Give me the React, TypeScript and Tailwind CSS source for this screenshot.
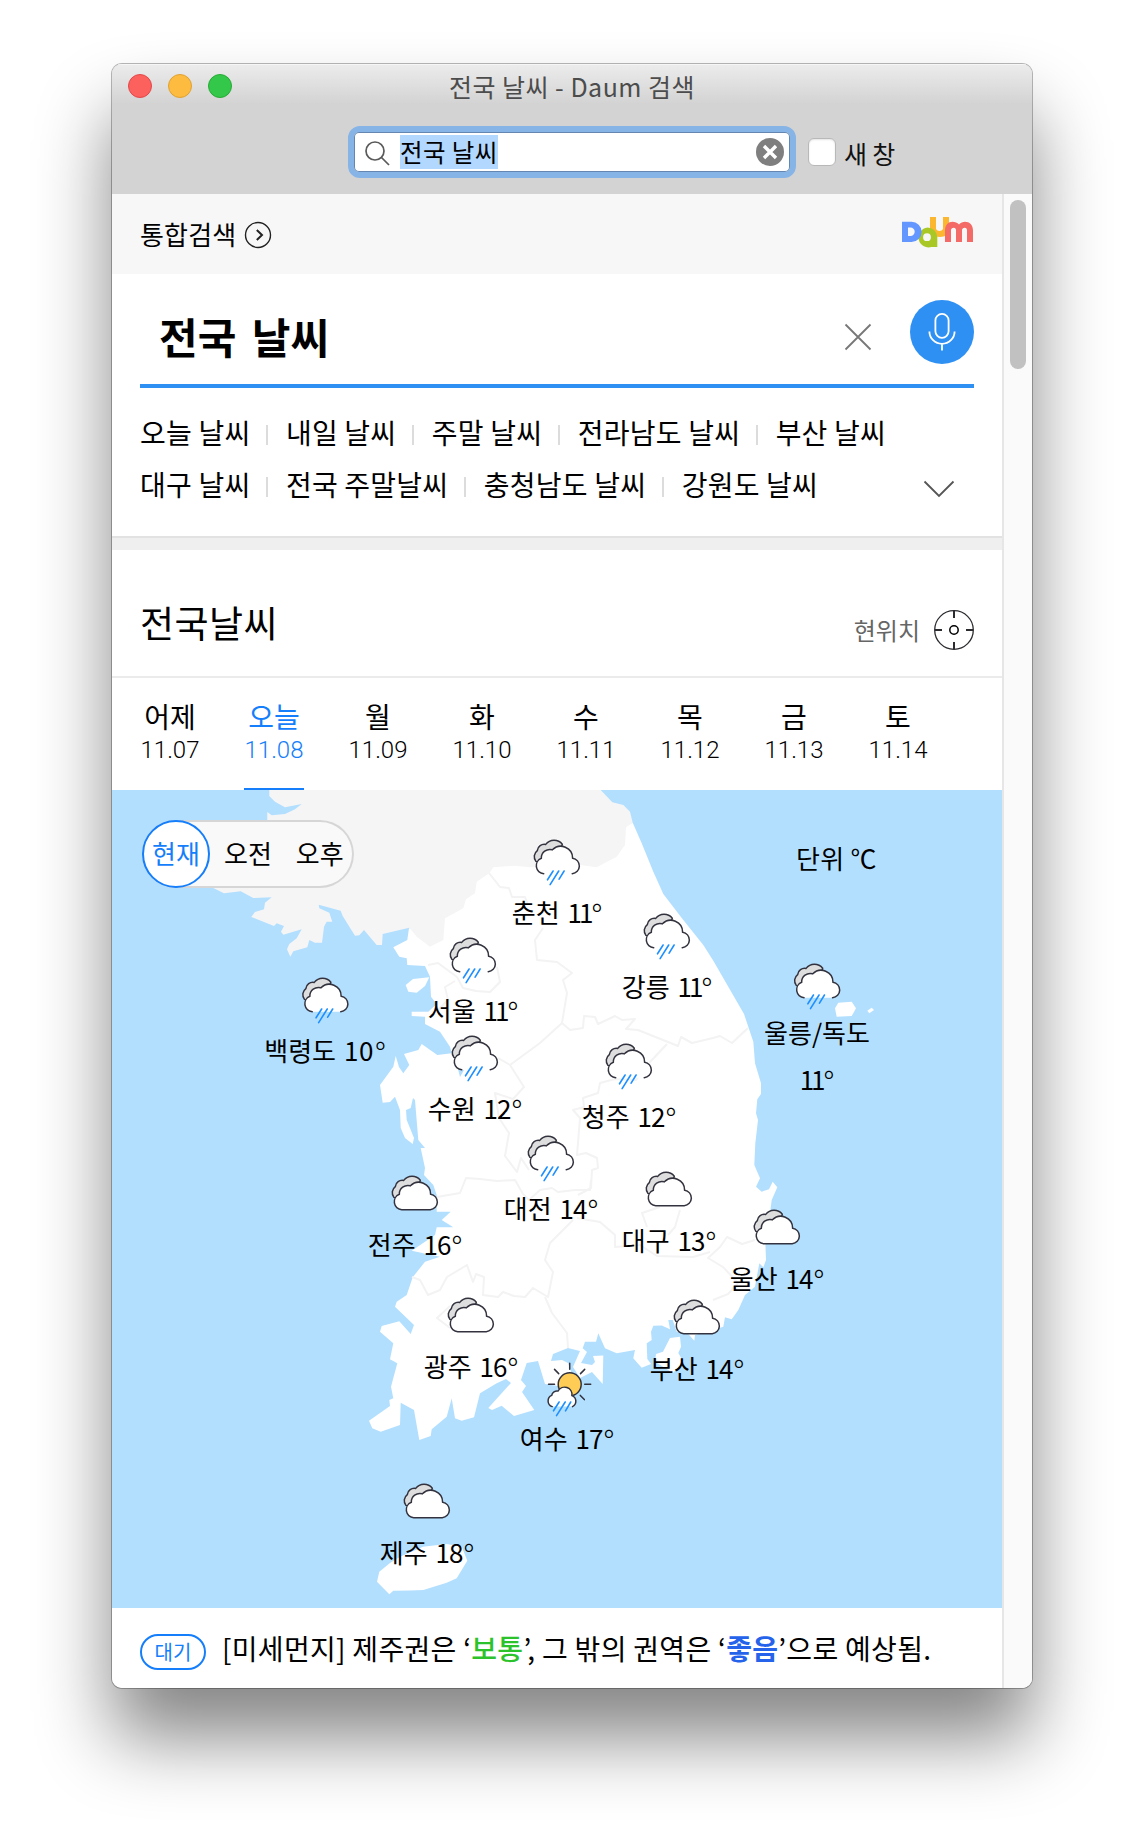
import React from 'react';

type Kind = 'rain' | 'cloud' | 'sun';

interface City {
  name: string;
  temp: number;
  x: number;
  y: number;
  kind: Kind;
  stacked?: boolean;
}

/* x = horizontal centre of the pin, y = top of its icon, both inside the 890×818 map */
const CITIES: City[] = [
  { name: '춘천', temp: 11, x: 445, y: 49, kind: 'rain' },
  { name: '강릉', temp: 11, x: 555, y: 123, kind: 'rain' },
  { name: '서울', temp: 11, x: 361, y: 147, kind: 'rain' },
  { name: '백령도', temp: 10, x: 213, y: 187, kind: 'rain' },
  { name: '수원', temp: 12, x: 363, y: 245, kind: 'rain' },
  { name: '청주', temp: 12, x: 517, y: 253, kind: 'rain' },
  { name: '대전', temp: 14, x: 439, y: 345, kind: 'rain' },
  { name: '울릉/독도', temp: 11, x: 705, y: 173, kind: 'rain', stacked: true },
  { name: '전주', temp: 16, x: 303, y: 385, kind: 'cloud' },
  { name: '대구', temp: 13, x: 557, y: 381, kind: 'cloud' },
  { name: '울산', temp: 14, x: 665, y: 419, kind: 'cloud' },
  { name: '광주', temp: 16, x: 359, y: 507, kind: 'cloud' },
  { name: '부산', temp: 14, x: 585, y: 509, kind: 'cloud' },
  { name: '여수', temp: 17, x: 455, y: 571, kind: 'sun' },
  { name: '제주', temp: 18, x: 315, y: 693, kind: 'cloud' },
];

const DAYS = [
  ['어제', '11.07'],
  ['오늘', '11.08'],
  ['월', '11.09'],
  ['화', '11.10'],
  ['수', '11.11'],
  ['목', '11.12'],
  ['금', '11.13'],
  ['토', '11.14'],
];

const RELATED = [
  ['오늘 날씨', '내일 날씨', '주말 날씨', '전라남도 날씨', '부산 날씨'],
  ['대구 날씨', '전국 주말날씨', '충청남도 날씨', '강원도 날씨'],
];

const FRONT = 'M12 34.7A8 8 0 0 1 9.6 19.3A8.6 8.6 0 0 1 20.7 10.8A11.8 11.8 0 0 1 40.9 19.2A7.8 7.8 0 0 1 40.5 34.7';

function CloudIcon({ rain }: { rain: boolean }) {
  return (
    <svg className="block h-12 w-[50px]" viewBox="0 0 50 48" fill="none" stroke="#33333f" strokeWidth="1.5" strokeLinecap="round">
      <path d="M4.2 22.4A7.6 7.6 0 0 1 5.6 11.6A7 7 0 0 1 14 5.4A10.6 10.6 0 0 1 30.6 5.2L28 14L10 24Z" fill="#dedede" />
      <path d={FRONT} fill="#fff" stroke="none" />
      <path d={rain ? FRONT : FRONT + 'Z'} fill={rain ? 'none' : '#fff'} />
      {rain && <path d="M21.4 32L15.8 40.8M27 32L18.4 45.6M32.4 32L27.4 40.2" stroke="#1e90ff" strokeWidth="1.6" />}
    </svg>
  );
}

function SunRainIcon() {
  return (
    <svg className="ml-[5px] block h-14 w-[50px]" viewBox="24 10 50 56" fill="none" stroke="#33333f" strokeWidth="1.5" strokeLinecap="round">
      <path d="M49 12.3v6M33.8 18.4l4.2 4.2M64 18.4l-4.2 4.2M27.8 33.3h6M64 33.3h6M59.6 44.4l4 4.2" />
      <circle cx="49" cy="33.3" r="11.5" fill="#ffcd55" />
      <path d="M31.5 55.6A6 6 0 0 1 31 44.4A5.4 5.4 0 0 1 37.4 40A7.4 7.4 0 0 1 51.2 44.6A6 6 0 0 1 51.8 55.6" fill="#fff" />
      <path d="M38.4 51L32.8 59.8M44.5 51L35.8 64.6M50 51L44.8 59.8" stroke="#1e90ff" strokeWidth="1.6" />
    </svg>
  );
}

function Temp({ value }: { value: number }) {
  const spacing = value === 11 ? 'tracking-[-3px]' : value === 10 ? 'tracking-[0.5px]' : 'tracking-[-1px]';
  return (
    <span>
      <span className={spacing}>{value}</span>
      <span className="ml-px text-[31px] leading-none font-light align-[-4px]">°</span>
    </span>
  );
}

function CityPin({ city }: { city: City }) {
  const gap = city.kind === 'rain' ? 'h-[51px]' : city.kind === 'sun' ? 'h-[55px]' : 'h-[47px]';
  return (
    <div
      className="absolute flex -translate-x-1/2 flex-col items-center whitespace-nowrap"
      style={{ left: city.x, top: city.y }}
    >
      <div className={gap}>{city.kind === 'sun' ? <SunRainIcon /> : <CloudIcon rain={city.kind === 'rain'} />}</div>
      {city.stacked ? (
        <div className="-mt-[6px] flex flex-col items-center text-[26px] leading-[47px]">
          <span className="h-[47px]">{city.name}</span>
          <span className="h-[47px]">
            <Temp value={city.temp} />
          </span>
        </div>
      ) : (
        <div className="flex h-[44px] gap-2 text-[26px] leading-[44px]">
          <span>{city.name}</span>
          <Temp value={city.temp} />
        </div>
      )}
    </div>
  );
}

function MapArt() {
  return (
    <svg className="block h-[818px] w-[890px]" viewBox="112 790 890 818">
      <g fill="#fff">
        <path d="M409 928L430 940L445 915L476 875L493 860L600 860L626 825L632.7 822.7L641.7 843.3L653.3 871.7L663.3 894L683.3 920L703.3 945L713.3 960.7L744 1014L753.3 1041.7L755 1063.3L761 1083.3V1094L757.3 1099.3L756 1113.3L758 1120L755.3 1143.3L754.3 1165L760 1178.3L756 1186.7L761.7 1191.7L769 1189.3L772.7 1181.7L777.3 1187.3L771.7 1200L770 1213L765 1233L766 1260L763.3 1267.3L759.3 1263.3L755 1286.7L745 1295L738.3 1310L731.7 1319.3L725 1317.3L723.3 1326.7L695 1335L694.3 1340.7L688.3 1334L676.7 1331.7L672.7 1320H668.3L670 1329.3L661.7 1325.5L653.3 1325.7L651 1331.7L651.7 1340L646.7 1343.3L647.3 1359L651 1364L641.7 1367.7L633.3 1358.3L635 1350L616.7 1353.3L605 1348.3L598.3 1333.3L596 1341.7H585L582.7 1348.3L587 1352L581 1363L592 1365L595 1362L593 1356L603.3 1355.5L602.7 1384L592 1372L580 1378L573 1367L580 1351L568 1348L553 1354L551 1361L562 1360L568 1363L574 1380L558 1386L545 1384L538 1361L526.7 1363L521 1380L526 1386L522 1392L534.3 1410L514 1416L501.7 1405.7L492 1410L488.3 1408L511 1383L506 1379L496.7 1383.3L480 1393.3L474 1417.3L461.7 1420.7L455 1418.3L451.7 1398.3L446.7 1416.7L431.7 1429.3L430.7 1436L419.3 1440L414 1410L400.7 1402.7L400 1425L380.7 1431.7L372.3 1428.3L369 1420.7L390 1406L389.3 1400L393.3 1398.3L391 1386.7L397.3 1363.3L390 1359.3L393.3 1343.3L380 1331.7L381.7 1326L399.3 1321.3L410.7 1334L414 1325L395 1306.7L396.7 1301.7L406.7 1295L412.7 1277.3L425 1261.7L440 1256.7L411.7 1250.7L435 1235L436.7 1227.3H453.3L441.7 1220L450.7 1211.7H436.7V1195L433.3 1185L424 1175L425 1168L420.7 1148H425L418.3 1140L415 1100L413 1098L410.7 1108L406 1110L406.7 1120L414 1138L412.7 1144L405 1138L400.7 1128L400 1110L395 1096.7L390 1102L382.7 1102.7L380 1085L393.3 1066.7L395.7 1056L399 1067L403.3 1073.3L409.3 1065L404 1054L418.3 1050L421.7 1044L437.3 1055L451.7 1053.3L450 1046.7L440 1031.7L425 1024V1016.7L411.7 1016V1011.7H428.3L436.7 1004L431 996.7L430 976.7L425 966L407.3 965L406.7 958.3L399.3 956.7L393.3 947.3L407.3 940Z" />
        <path d="M405.7 985L413 979L429.3 977.3L425 986L416.7 992.7L408.3 991.7Z" />
        <path d="M835 1008.3L838.3 1002.7L851.7 1001.7L856 1008.3L851.7 1016L836.7 1016.7Z" />
        <path d="M867.3 1010.7L871.7 1007.7L874 1010L869.3 1013.3Z" />
        <path d="M670 1338L680 1336.7L681 1346.7L678.3 1353L683.3 1361.7L673 1373L655 1361.7L656 1354L663 1351.7Z" />
        <path d="M377 1581.7L379.3 1571.7L390 1563L400 1556.7L423 1546.7L446.7 1544L461.7 1546.7L467.3 1560.7L456.7 1578.3L446.7 1582.7L423.3 1590L410 1590.5L393.3 1590.7L389.3 1594.3Z" />
      </g>
      <path fill="#b3dfff" d="M458 1069L464 1070L460 1077Z" />
      <path
        fill="#f5f5f5"
        d="M269.3 790V796L275 801.7L285 807.3L301.7 804L295 809.3L285 814L271.7 815.3L267.3 812V821L200 870L213.3 888L224 893.3L240.7 891.3L253.3 898L271.7 897.3L265 902.7L264 909.3L255 912L251.3 917L274 926L276.7 923.3L284 926L281 931.7L283.3 934.7L301.7 929.3L296.7 938.3L289.3 944L287 949.3L290.3 956.7L293.3 951.3L307.3 947.3L309.3 940L315 942.7H322L324 926.7L326.7 921.7L332.3 921.7L329.3 912.7L319.3 908.3L318.7 904.7L340.7 910.7L342.7 916L355 935.7L359.3 935.3L364 930L376.7 945H382L382.7 934L409.3 927.7L416.7 936.7L430 946.7L443.3 940L445 918.3L463.3 908.3L466 899.3L475 893.3L476.7 881.7L489.3 873.3L493.3 867.3L515 865.7L530 867.3L560 864L580 865L596.7 867.3L616.7 856.7L625 845L626 827.3L632.7 822.7L630 811.7L623.3 805L612.3 802.3L600.7 790Z"
      />
      <g fill="none" stroke="#f3f3f3" strokeWidth="2" strokeLinejoin="round">
        <path d="M489 873L500 887L509 888L512 897L525 897L528 905M543 928L535 940L537 960L557 962L572 973L563 980L567 993L562 1023L540 1043L510 1065L498 1058M510 1065L524 1087L513 1099L495 1093L499 1118L509 1133L505 1156L517 1172L521 1158L529 1170" />
        <path d="M562 1023L570 1030L583 1028L584 1016L595 1017L598 1024L615 1016L622 1020L635 1019L626 1029L638 1030L678 1046L681 1037L692 1043L713 1038L720 1036L732 1043L748 1028" />
        <path d="M667 1044L650 1062L636 1080L615 1079L600 1083L598 1093L583 1098L584 1107L573 1110L580 1118L577 1155L586 1153L597 1158L598 1168L592 1170L591 1188L578 1195" />
        <path d="M437 1197L460 1193L466 1178L480 1179L497 1181L515 1180L523 1194L529 1200L540 1190L552 1188L558 1192L575 1190L590 1190L591 1180" />
        <path d="M577 1218L600 1222L615 1235V1247L640 1245L657 1256L693 1257L710 1252" />
        <path d="M573 1220L550 1243L545 1260L553 1272L548 1297L533 1288L525 1297L514 1296L503 1292L498 1297L483 1295L484 1277L476 1274L473 1282L467 1265L447 1277L440 1290L428 1295L420 1280L412 1277" />
        <path d="M545 1297L552 1313L567 1333L568 1348M660 1207L642 1213L647 1227M680 1210L675 1227L668 1235M755 1240L742 1244L727 1237L720 1247L708 1258L723 1267L738 1283L728 1294L713 1300M450 1306L437 1318L450 1328" />
        <path d="M428 965L438 963L457 977L463 988L476 991L490 992L500 982L497 967M455 981L445 987L448 1000L438 1010" />
      </g>
    </svg>
  );
}

function DaumLogo() {
  return (
    <svg className="mb-[4px] block h-[31px] w-[72px]" viewBox="0 0 72 31">
      <path d="M28 0H34V12A4 4 0 0 0 41 12V0H47V14C47 17 43 20 38 20C31 20 28 17 28 12Z" fill="#fcb731" />
      <path fillRule="evenodd" d="M25.5 10.5A9.8 9.8 0 0 1 35.3 20V30H29.5A10 10 0 1 1 25.5 10.5ZM25 16.3A3.9 3.9 0 1 0 25 24.1A3.9 3.9 0 0 0 25 16.3Z" fill="#aac825" />
      <path fillRule="evenodd" d="M0 4.7H9.5A10 10 0 0 1 9.5 25H0ZM6 10.6V19H8.5A4.2 4.2 0 0 0 8.5 10.6Z" fill="#6496ff" />
      <path d="M43 25V13.5C43 7.5 46.5 4.7 50.5 4.7C53 4.7 55.3 5.7 57 7.5C58.7 5.7 60.8 4.7 63 4.7C67.5 4.7 71 7.5 71 13.5V25H65V13.5C65 11.5 64.3 10.7 62.7 10.7C61 10.7 60 11.5 60 13.5V25H54V13.5C54 11.5 53.3 10.7 51.7 10.7C50 10.7 49 11.5 49 13.5V25Z" fill="#f46a66" />
    </svg>
  );
}

function TitleBar() {
  return (
    <header className="h-[130px] bg-[#d3d3d3] bg-[linear-gradient(#ececec,#d3d3d3_40px)] shadow-[inset_0_1px_0_#f6f6f6]">
      <div className="grid h-11 grid-cols-[1fr_auto_1fr] items-center pl-4">
        <div className="flex gap-4">
          <span className="size-6 rounded-full border border-[#e2484a] bg-[#fc615d]" />
          <span className="size-6 rounded-full border border-[#dfa032] bg-[#fdbc40]" />
          <span className="size-6 rounded-full border border-[#27aa35] bg-[#34c84a]" />
        </div>
        <h1 className="mr-4 text-[25px] leading-11 tracking-[0.5px] text-[#4c4c4c]">전국 날씨 - Daum 검색</h1>
      </div>
      <div className="flex items-center pt-[18px] pl-[236px]">
        <div className="flex h-[52px] w-[448px] items-center rounded-xl border-[6px] border-[#87b4e6]">
          <div className="flex h-10 w-full items-center rounded-[5px] bg-white pr-[6px] pl-[10px] shadow-[inset_0_0_0_1px_#6387b0]">
            <svg className="mr-[9px] size-[27px]" viewBox="0 0 27 27" fill="none" stroke="#5a5a5a" strokeWidth="1.7">
              <circle cx="11" cy="12" r="9" />
              <path d="M17.5 18.5L25 26" />
            </svg>
            <span className="h-[34px] w-[98px] bg-[#b2d8ff] text-[24.5px] leading-[33px] tracking-[0.4px] whitespace-nowrap text-black">전국 날씨</span>
            <svg className="ml-auto size-7" viewBox="0 0 28 28">
              <circle cx="14" cy="14" r="14" fill="#7f7f7f" />
              <path d="M8 8L20 20M20 8L8 20" stroke="#fff" strokeWidth="3.4" />
            </svg>
          </div>
        </div>
        <span className="ml-3 size-7 rounded-[6px] border border-[#b8b8b8] bg-white shadow-[inset_0_1px_2px_#e4e4e4]" />
        <span className="ml-2 pt-px text-[25px] leading-8 tracking-[-0.2px] text-[#111]">새 창</span>
      </div>
    </header>
  );
}

function SearchArea() {
  return (
    <>
      <div className="flex h-20 items-center justify-between bg-[#f7f7f7] px-7">
        <div className="flex items-center gap-2">
          <span className="text-[26px] leading-10 tracking-[0.2px]">통합검색</span>
          <svg className="mt-px size-7" viewBox="0 0 28 28" fill="none" stroke="#222">
            <circle cx="14" cy="14" r="12.5" strokeWidth="1.4" />
            <path d="M12.8 9L18 14L12.8 19" strokeWidth="2" />
          </svg>
        </div>
        <DaumLogo />
      </div>
      <div className="px-7">
        <div className="flex h-[114px] items-center border-b-4 border-[#2f90f3] pt-[17px] pl-[19px]">
          <span className="pb-1 text-[42px] leading-[56px] font-bold [word-spacing:6px]">전국 날씨</span>
          <svg className="mr-[38px] mb-[2px] ml-auto size-[28px]" viewBox="0 0 28 28" stroke="#777" strokeWidth="1.8">
            <path d="M1.5 1.5L26.5 26.5M26.5 1.5L1.5 26.5" />
          </svg>
          <div className="mb-[11px] flex size-16 items-center justify-center rounded-full bg-[#2f90f3]">
            <svg className="h-[38px] w-7" viewBox="0 0 28 38" fill="none" stroke="#fff" strokeWidth="1.8">
              <rect x="7.4" y="0.9" width="13.2" height="24" rx="6.6" />
              <path d="M1.4 18.5A12.6 12.3 0 0 0 26.6 18.5M14 31V37.5" />
            </svg>
          </div>
        </div>
        <div className="flex h-[148px] pt-[18px]">
          <div className="flex flex-col">
            {RELATED.map((row) => (
              <div key={row[0]} className="flex h-[52px] items-center">
                {row.map((label, i) => (
                  <React.Fragment key={label}>
                    {i > 0 && <span className="mt-[6px] mr-[18px] ml-[15.5px] h-5 w-[2px] bg-[#dcdcdc]" />}
                    <span className="text-[28px] leading-[52px] tracking-[0.22px] whitespace-nowrap">{label}</span>
                  </React.Fragment>
                ))}
              </div>
            ))}
          </div>
          <svg className="mt-[74px] mr-[19px] ml-auto h-[18px] w-8" viewBox="0 0 32 18" fill="none" stroke="#555" strokeWidth="1.8">
            <path d="M1.5 1.5L16 16L30.5 1.5" />
          </svg>
        </div>
      </div>
      <div className="h-[14px] border-t-2 border-[#e2e2e2] bg-[#efefef]" />
    </>
  );
}

function WeatherHeader() {
  return (
    <>
      <div className="flex h-[128px] items-center justify-between border-b-2 border-[#ebebeb] px-7 pt-[18px]">
        <h2 className="text-[37px] leading-[56px] tracking-[0.5px]">전국날씨</h2>
        <div className="flex items-center gap-[14px] pt-[15px]">
          <span className="text-[24px] leading-8 text-[#666]">현위치</span>
          <svg className="size-10" viewBox="0 0 40 40" fill="none" stroke="#2b2b30">
            <circle cx="20" cy="20" r="19.3" strokeWidth="1.3" />
            <circle cx="20" cy="20" r="4.2" strokeWidth="1.5" stroke="#000" />
            <path d="M20 1V8M20 32V39M1 20H8M32 20H39" strokeWidth="2" />
          </svg>
        </div>
      </div>
      <nav className="flex h-28 pl-[6px]">
        {DAYS.map(([day, date], i) => (
          <div key={date} className={`flex w-[104px] flex-col items-center pt-[17px] ${i === 1 ? 'text-[#157efb]' : 'text-black'}`}>
            <span className="text-[28px] leading-[42px]">{day}</span>
            <span className="font-['Roboto',sans-serif] text-[24px] leading-[26px] font-light">{date}</span>
            {i === 1 && <span className="mt-auto h-[2px] w-[60px] bg-[#157efb]" />}
          </div>
        ))}
      </nav>
    </>
  );
}

function WeatherMap() {
  return (
    <div className="relative h-[818px] w-[890px] overflow-hidden bg-[#b3dfff]">
      <MapArt />
      <div className="absolute top-[30px] left-[30px] flex h-[68px] w-[212px] items-center rounded-full bg-[#f9f9f9] text-[26px] leading-10 shadow-[inset_0_0_0_2px_#d6d6d6]">
        <span className="flex size-[68px] items-center justify-center rounded-full border-2 border-[#157efb] bg-white pb-[3px] whitespace-nowrap text-[#157efb]">현재</span>
        <span className="ml-[14px] pb-[3px]">오전</span>
        <span className="ml-6 pb-[3px]">오후</span>
      </div>
      <span className="absolute top-12 left-[684px] text-[26px] leading-10 tracking-[0.3px]">단위 ℃</span>
      {CITIES.map((city) => (
        <CityPin key={city.name} city={city} />
      ))}
    </div>
  );
}

function Notice() {
  return (
    <div className="flex h-20 items-center gap-4 px-7">
      <span className="mt-2 flex h-9 w-[66px] items-center justify-center rounded-full border-2 border-[#157efb] pb-px text-[20px] leading-8 text-[#157efb]">대기</span>
      <p className="text-[28px] leading-10 tracking-[0.3px] whitespace-nowrap">
        [미세먼지] 제주권은 ‘<span className="font-medium text-[#2cc22c]">보통</span>’, 그 밖의 권역은 ‘
        <span className="font-bold text-[#2563eb]">좋음</span>’으로 예상됨.
      </p>
    </div>
  );
}

export default function App() {
  return (
    <div className="h-[1848px] w-[1144px] overflow-hidden bg-white pt-16 pl-28 font-['Noto_Sans_CJK_KR',sans-serif] text-black">
      <div className="h-[1624px] w-[920px] rounded-[10px] shadow-[0_0_0_1px_rgba(0,0,0,0.28),0_50px_75px_rgba(0,0,0,0.48)]">
        <div className="h-full overflow-hidden rounded-[10px] bg-white">
          <TitleBar />
          <div className="flex h-[1494px]">
            <main className="w-[890px]">
              <SearchArea />
              <WeatherHeader />
              <WeatherMap />
              <Notice />
            </main>
            <aside className="w-[30px] border-l-2 border-[#e6e6e6] bg-[#fafafa] pt-[6px] pl-[6px]">
              <div className="h-[169px] w-4 rounded-full bg-[#c1c1c1]" />
            </aside>
          </div>
        </div>
      </div>
    </div>
  );
}
